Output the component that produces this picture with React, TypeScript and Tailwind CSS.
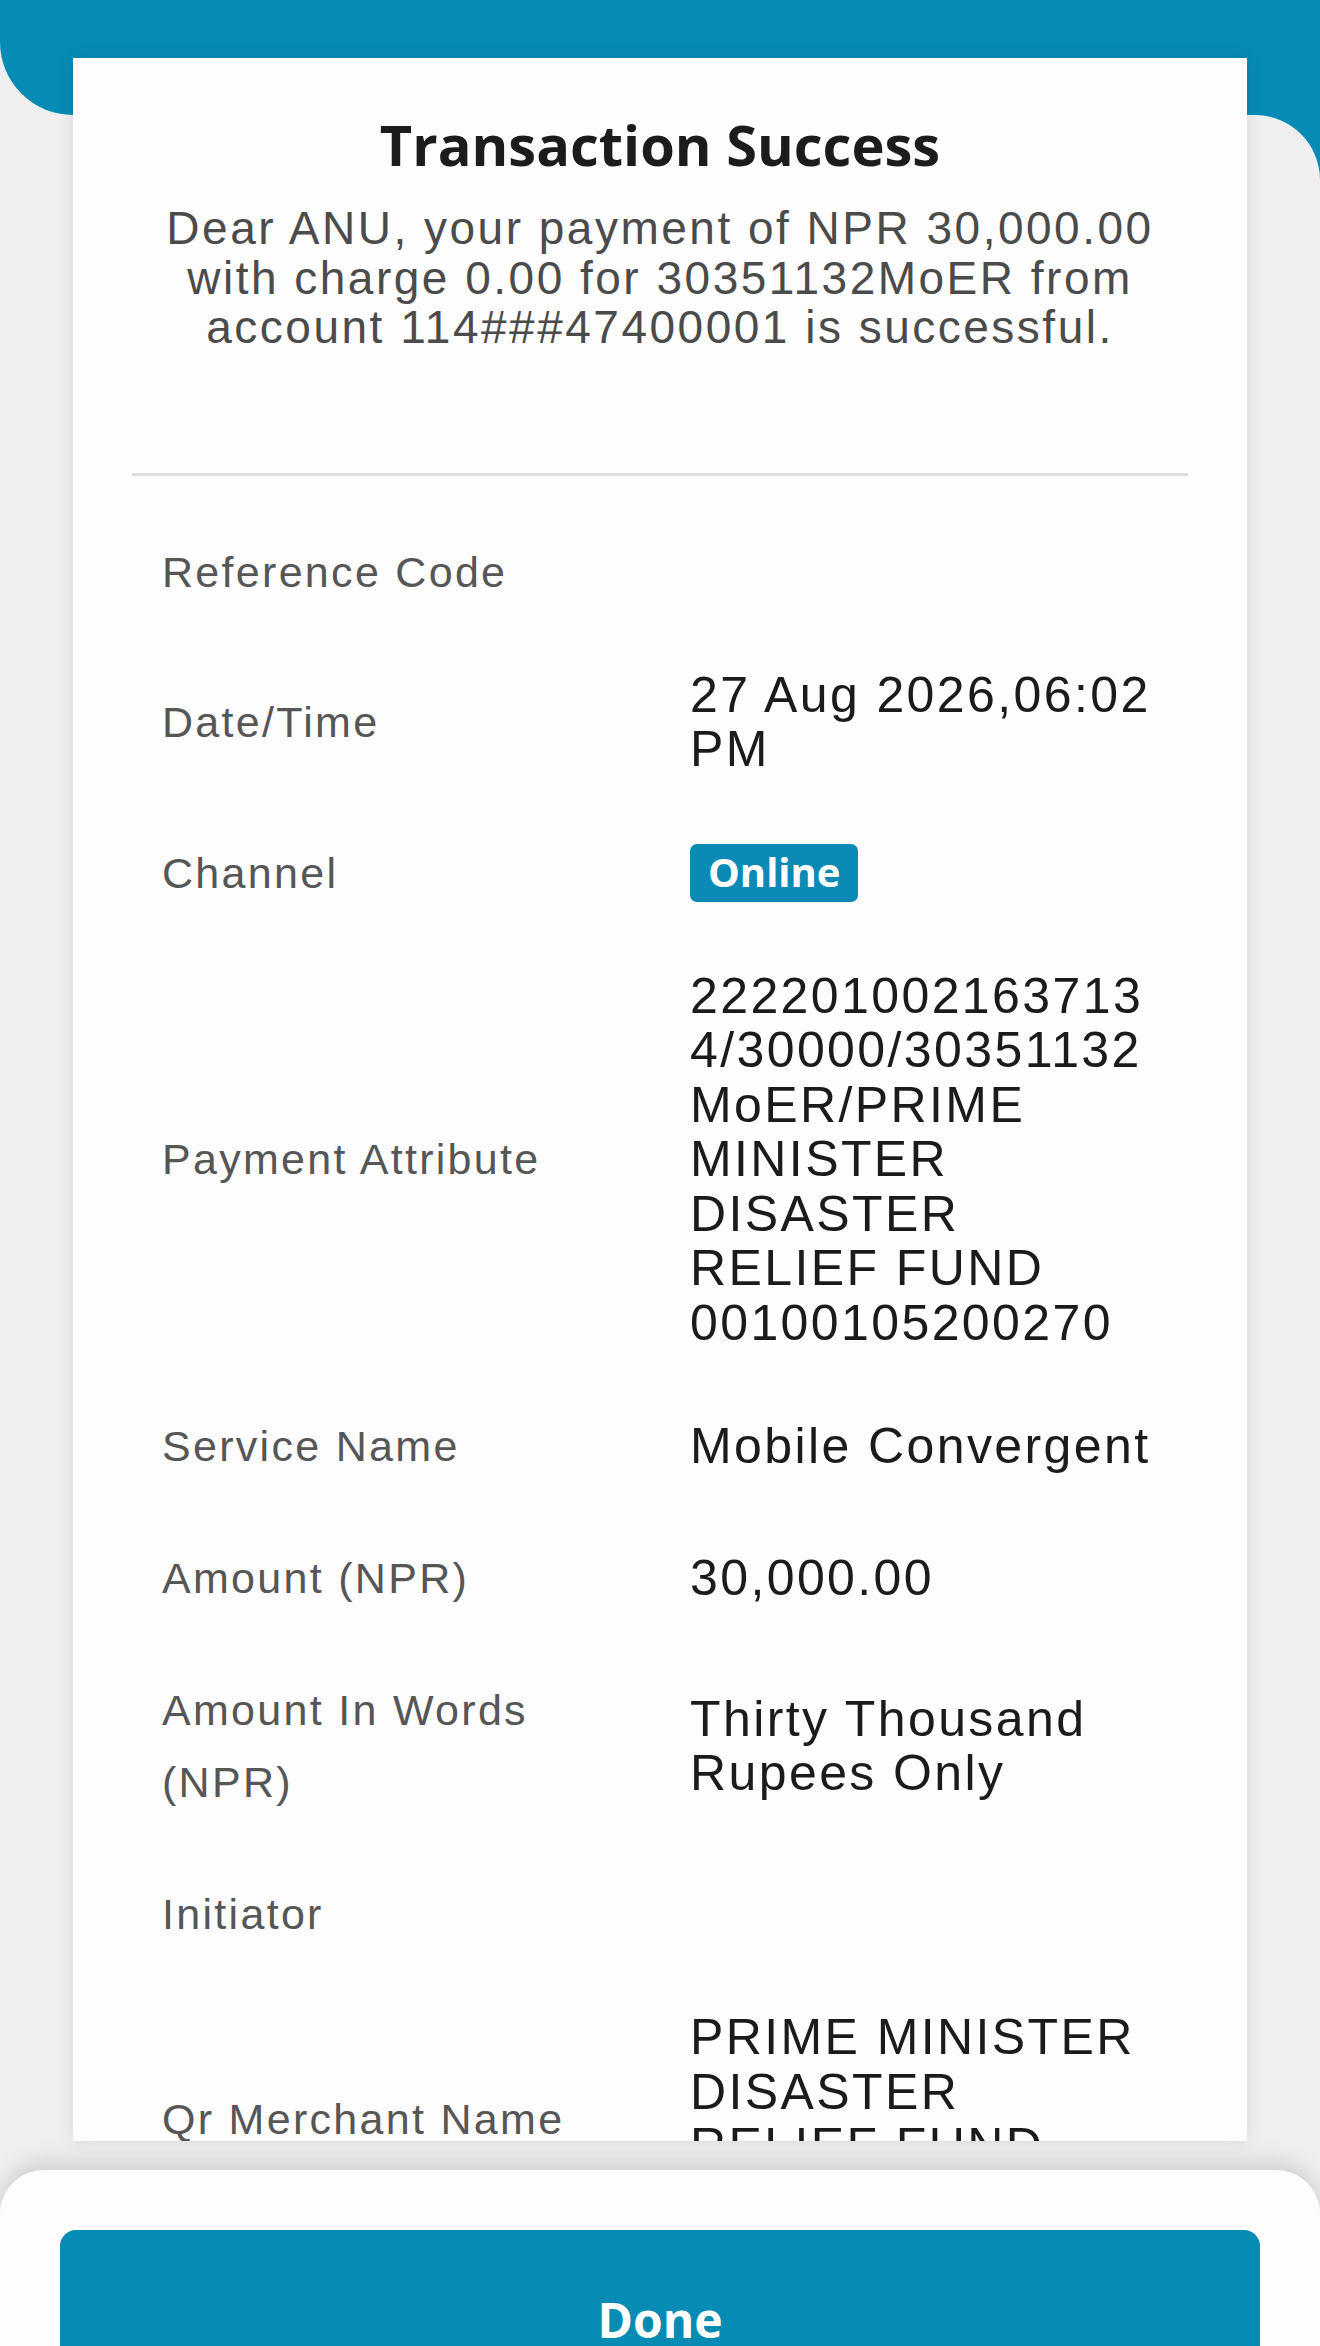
import React from 'react';

type Row = {
  label: string[];
  value?: string[];
  badge?: string;
};

const rows: Row[] = [
  { label: ['Reference Code'] },
  { label: ['Date/Time'], value: ['27 Aug 2026,06:02', 'PM'] },
  { label: ['Channel'], badge: 'Online' },
  {
    label: ['Payment Attribute'],
    value: [
      '222201002163713',
      '4/30000/30351132',
      'MoER/PRIME',
      'MINISTER',
      'DISASTER',
      'RELIEF FUND',
      '00100105200270',
    ],
  },
  { label: ['Service Name'], value: ['Mobile Convergent'] },
  { label: ['Amount (NPR)'], value: ['30,000.00'] },
  { label: ['Amount In Words', '(NPR)'], value: ['Thirty Thousand', 'Rupees Only'] },
  { label: ['Initiator'] },
  {
    label: ['Qr Merchant Name'],
    value: ['PRIME MINISTER', 'DISASTER', 'RELIEF FUND', '00100105200270'],
  },
];

const DetailRow: React.FC<{ row: Row }> = ({ row }) => (
  <div className="flex items-center py-[30px]">
    <div className="w-[617px] shrink-0 pl-[89px] text-[43px] leading-[72px] tracking-[2.3px] text-[#565656]">
      {row.label.map((l) => (
        <div key={l} className="whitespace-nowrap">
          {l}
        </div>
      ))}
    </div>
    <div className="flex-1 text-[50px] leading-[54.5px] tracking-[2.4px] text-[#1b1b1b]">
      {row.badge && (
        <span className="inline-flex h-[58px] items-center rounded-[7px] bg-[#0a8ab5] px-[18px] font-['Open_Sans',sans-serif] text-[40px] font-bold tracking-normal text-white">
          {row.badge}
        </span>
      )}
      {row.value?.map((v, i) => (
        <div key={i} className="whitespace-nowrap">
          {v}
        </div>
      ))}
    </div>
  </div>
);

const App: React.FC = () => {
  return (
    <div className="flex h-[2346px] w-[1320px] flex-col overflow-hidden bg-[#efefef] font-['Liberation_Sans',Arial,sans-serif]">
      {/* teal header */}
      <div className="h-[115px] shrink-0 rounded-bl-[73px] bg-[#068bb5]" />

      <div className="flex flex-1 flex-col bg-[#068bb5]">
        <div className="flex flex-1 flex-col rounded-tr-[65px] bg-[#efefef]">
          {/* receipt card */}
          <div className="relative z-10 mx-[73px] -mt-[57px] h-[2083px] overflow-hidden bg-[#fdfdfd] shadow-[0_0_14px_rgba(0,0,0,0.10)]">
            <div className="pt-[51px] text-center">
              <h1 className="font-['Open_Sans',sans-serif] text-[56px] font-bold leading-[70px] text-[#1c1c1e]">
                Transaction Success
              </h1>
              <p className="mt-[25px] text-[46px] leading-[49.5px] tracking-[2.5px] text-[#4b4b4b]">
                Dear ANU, your payment of NPR 30,000.00
                <br />
                with charge 0.00 for 30351132MoER from
                <br />
                account 114###47400001 is successful.
              </p>
            </div>

            <div className="mx-[59px] mt-[120px] h-[3px] bg-[#dedede]" />

            <div className="pt-[30px]">
              {rows.map((row) => (
                <DetailRow key={row.label.join(' ')} row={row} />
              ))}
            </div>
          </div>

          {/* bottom sheet */}
          <div className="relative z-20 mt-[29px] flex-1 rounded-t-[44px] bg-[#fdfdfd] px-[60px] pt-[60px] shadow-[0_-10px_22px_rgba(0,0,0,0.12)]">
            <button className="flex h-[180px] w-full items-center justify-center rounded-[16px] bg-[#068bb5] font-['Open_Sans',sans-serif] text-[48px] font-bold text-white">
              Done
            </button>
          </div>
        </div>
      </div>
    </div>
  );
};

export default App;
